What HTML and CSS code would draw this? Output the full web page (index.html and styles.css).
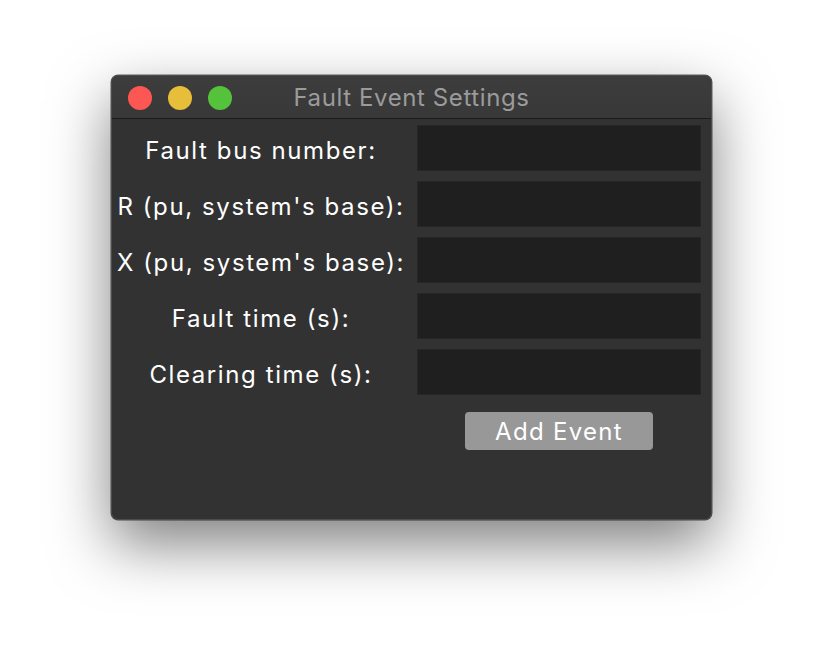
FILE: index.html
```html
<!DOCTYPE html>
<html>
<head>
<meta charset="utf-8">
<link rel="stylesheet" href="styles.css">
</head>
<body>
<div class="window">
  <div class="titlebar">
    <div class="lights">
      <span class="light red"></span>
      <span class="light yellow"></span>
      <span class="light green"></span>
    </div>
    <div class="title">Fault Event Settings</div>
  </div>
  <div class="content">
    <div class="form">
      <label class="label">Fault bus number:</label>
      <div class="input"></div>
      <label class="label">R (pu, system's base):</label>
      <div class="input"></div>
      <label class="label">X (pu, system's base):</label>
      <div class="input"></div>
      <label class="label">Fault time (s):</label>
      <div class="input"></div>
      <label class="label">Clearing time (s):</label>
      <div class="input"></div>
      <div class="spacer"></div>
      <div class="actions"><button class="button">Add Event</button></div>
    </div>
  </div>
</div>
</body>
</html>
```
FILE: styles.css
```css
html, body {
  margin: 0;
  padding: 0;
  background: #ffffff;
}
body {
  width: 824px;
  height: 668px;
  overflow: hidden;
  font-family: "Inter", "Liberation Sans", sans-serif;
}
.window {
  margin: 75px 0 0 111px;
  width: 601px;
  height: 445px;
  box-sizing: border-box;
  border: 1px solid #4c4c4c;
  border-radius: 7px;
  background: #323232;
  box-shadow: 0 24px 60px rgba(0,0,0,0.5), 0 0 0 0.5px rgba(0,0,0,0.6);
  overflow: hidden;
  display: flex;
  flex-direction: column;
}
.titlebar {
  position: relative;
  height: 42px;
  background: linear-gradient(#3d3d3d, #383838);
  border-bottom: 1px solid #1c1c1c;
  display: flex;
  align-items: center;
  justify-content: center;
  flex-shrink: 0;
}
.lights {
  position: absolute;
  left: 16px;
  top: 10px;
  display: flex;
  gap: 16px;
}
.light {
  width: 24px;
  height: 24px;
  border-radius: 50%;
  display: block;
}
.red { background: #fc5753; }
.yellow { background: #e6be3a; }
.green { background: #55c23c; }
.title {
  color: #9b9b9b;
  font-size: 24px;
  letter-spacing: 0.6px;
  margin-top: 1px;
}
.content {
  padding: 6px 10px 0 0;
}
.form {
  display: grid;
  grid-template-columns: 305px 284px;
  grid-auto-rows: 46px;
  row-gap: 10px;
}
.label {
  color: #ffffff;
  font-size: 24px;
  letter-spacing: 1.6px;
  display: flex;
  align-items: center;
  justify-content: center;
  white-space: nowrap;
  padding-top: 5px;
  padding-right: 7px;
}
.input {
  background: #1f1f1f;
  border: 1px solid #262626;
  box-sizing: border-box;
}
.actions {
  display: flex;
  justify-content: center;
  align-items: flex-start;
  padding-top: 7px;
}
.button {
  width: 188px;
  height: 38px;
  border: none;
  border-radius: 4px;
  background: #989898;
  color: #ffffff;
  font-family: inherit;
  font-size: 24px;
  padding: 0;
  letter-spacing: 1.3px;
}
```
